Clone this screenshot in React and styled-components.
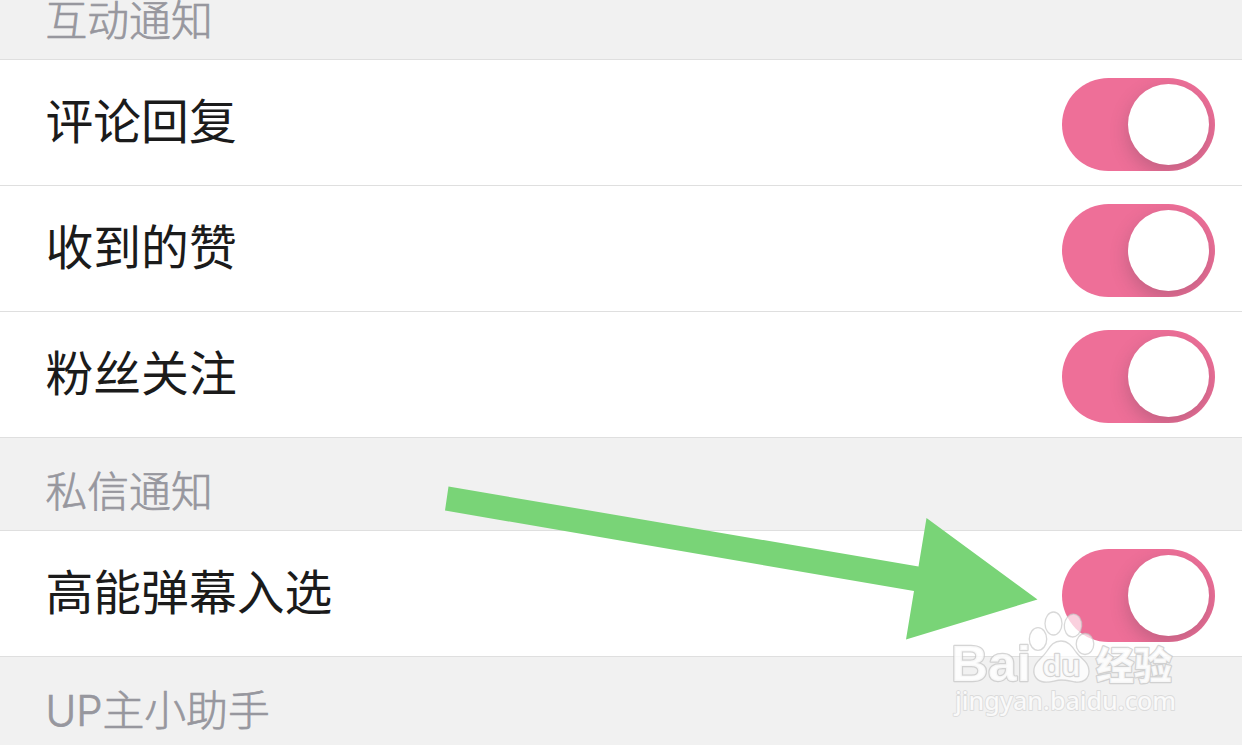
import React from 'react'
import styled, {createGlobalStyle} from 'styled-components';

const interactions = ['评论回复', '收到的赞', '粉丝关注'];

export default class App extends React.Component{

    render() {
        return(
            <Screen>
                <GlobalStyle/>
                <Heading $first>互动通知</Heading>
                {interactions.map(label => <Setting key={label} label={label}/>)}
                <Heading>私信通知</Heading>
                <Setting label="高能弹幕入选"/>
                <Heading>UP主小助手</Heading>
                <Arrow/>
                <Watermark/>
            </Screen>
        )
    }
}

const Setting = ({label}) => (
    <Row>
        <Label>{label}</Label>
        <Toggle role="switch" aria-checked="true" aria-label={label}>
            <Knob/>
        </Toggle>
    </Row>
)

const Arrow = () => (
    <Overlay viewBox="0 0 1242 745">
        <path d="M448.5 486.5L918.5 566.5L926.5 518L1037.5 599.5L906 639.5L914 591L445 510.5Z" fill="#79d477"/>
    </Overlay>
)

const Watermark = () => (
    <Overlay viewBox="0 0 1242 745">
        <Paw>
            <ellipse cx="1038" cy="639" rx="8.7" ry="11.3"/>
            <ellipse cx="1053.5" cy="623.5" rx="8.5" ry="11.5"/>
            <ellipse cx="1073" cy="625.5" rx="8.7" ry="11.5" transform="rotate(5 1073 625.5)"/>
            <ellipse cx="1085" cy="644" rx="8.8" ry="10.5"/>
            <path d="M1061 641C1068 641 1072 646 1076 652C1081 659 1089 662 1089 671C1089 679 1083 683 1076 682C1070 681 1066 680 1061 680C1055 680 1051 683 1044 682C1037 681 1033 676 1034 669C1035 661 1042 659 1047 651C1051 645 1054 641 1061 641Z"/>
        </Paw>
        <Mark x="951" y="681" textLength="80" lengthAdjust="spacingAndGlyphs" $size={50} $weight={700} $face="Liberation Sans">Bai</Mark>
        <Mark x="1042.5" y="675.5" textLength="38" lengthAdjust="spacingAndGlyphs" $size={29} $weight={600}>du</Mark>
        <Mark x="1096" y="678.5" textLength="76" $size={38} $weight={900}>经验</Mark>
        <Mark x="955" y="710" textLength="221" lengthAdjust="spacingAndGlyphs" $size={25.5} $weight={500} $soft>jingyan.baidu.com</Mark>
    </Overlay>
)

const GlobalStyle = createGlobalStyle`
  body {
    margin: 0;
    background: #f1f1f1;
  }
`;

const Screen = styled.div`
  position: relative;
  height: 745px;
  overflow: hidden;
  background: #f1f1f1;
  font-family: Inter, "Noto Sans CJK SC", sans-serif;
`;

const Heading = styled.div`
  box-sizing: border-box;
  height: ${props => props.$first ? '60px' : '93px'};
  padding: ${props => props.$first ? '3px' : '36px'} 0 0 45.5px;
  border-bottom: 1px solid #dfdfdf;
  line-height: 36px;
  font-size: 41.8px;
  font-weight: 300;
  color: #97979e;
  -webkit-text-stroke: 0.7px #97979e;
`;

const Row = styled.div`
  box-sizing: border-box;
  display: flex;
  justify-content: space-between;
  height: 126px;
  padding: 18px 27px 0 45.5px;
  background: #fff;
  border-bottom: 1px solid #dfdfdf;
`;

const Label = styled.span`
  line-height: 81px;
  font-family: "Noto Sans CJK SC", sans-serif;
  font-size: 47.8px;
  color: #1b1b1b;
`;

const Toggle = styled.div`
  box-sizing: border-box;
  display: flex;
  justify-content: flex-end;
  width: 153px;
  height: 93px;
  padding: 6px;
  border-radius: 47px;
  overflow: hidden;
  background: #ee6f98;
`;

const Knob = styled.div`
  width: 81px;
  height: 81px;
  border-radius: 50%;
  background: #fff;
  box-shadow: 0 7px 18px rgba(70, 60, 70, 0.27);
`;

const Overlay = styled.svg`
  position: absolute;
  top: 0;
  left: 0;
  width: 1242px;
  height: 745px;
  pointer-events: none;
`;

const Paw = styled.g`
  fill: rgba(255, 255, 255, 0.68);
  stroke: rgba(195, 195, 195, 0.65);
  stroke-width: 1.3px;
`;

const Mark = styled.text`
  font-family: "${props => props.$face || 'Noto Sans'}", "Noto Sans CJK SC", sans-serif;
  font-size: ${props => props.$size}px;
  font-weight: ${props => props.$weight};
  fill: rgba(255, 255, 255, 0.82);
  stroke: ${props => props.$soft ? 'rgba(205, 205, 205, 0.6)' : 'rgba(195, 195, 195, 0.7)'};
  stroke-width: ${props => props.$soft ? 1.8 : 2.4}px;
  stroke-linejoin: round;
  paint-order: stroke;
`;
